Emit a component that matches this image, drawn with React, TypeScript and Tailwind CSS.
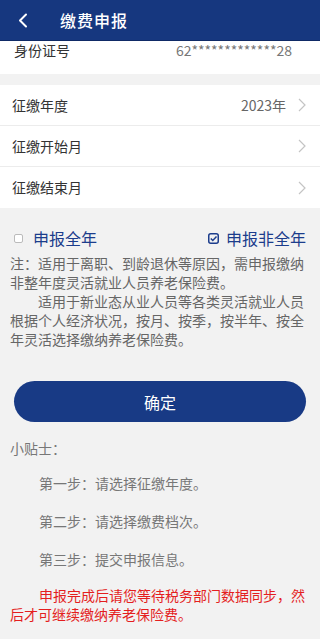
// 缴费申报 page
// Sections: Header · ID · Selections · Options · Notes · Button · Tips

const FONT = { fontFamily: '"Noto Sans CJK SC", "Noto Sans", Roboto, sans-serif' }

function Chevron() {
  return (
    <svg width="8" height="14" viewBox="0 0 8 14" fill="none" stroke="#c4c4c4" strokeWidth="1.2">
      <polyline points="1 1 7 7 1 13" />
    </svg>
  )
}

function SelectRow({ label, value, last }: { label: string; value?: string; last?: boolean }) {
  return (
    <div className={`flex items-center h-[41px] pl-3 pr-[14px] ${last ? '' : 'border-b border-[#ececec]'}`}>
      <span className="flex-1 text-[14px] text-[#333]">{label}</span>
      {value && <span className="text-[14px] text-[#666] mr-[12px]">{value}</span>}
      <Chevron />
    </div>
  )
}

export default function App() {
  return (
    <div className="w-[320px] h-[639px] overflow-hidden bg-[#f2f2f2]" style={FONT}>
      {/* Header */}
      <header className="h-[41px] bg-[#16377f] border-b border-[#0f2a66] flex items-center">
        <div className="w-[60px] pl-[18px]">
          <svg width="10" height="15" viewBox="0 0 10 15" fill="none" stroke="white" strokeWidth="2" strokeLinecap="round" strokeLinejoin="round">
            <polyline points="8 1.5 2 7.5 8 13.5" />
          </svg>
        </div>
        <h1 className="text-[16px] font-medium text-white tracking-[1px]">缴费申报</h1>
      </header>

      {/* ID number (scrolled) */}
      <div className="h-[33px] bg-white flex items-start px-[14px]">
        <span className="flex-1 text-[14px] leading-[18px] text-[#333]">身份证号</span>
        <span className="text-[14px] leading-[18px] text-[#777] mr-[14px]">62*************28</span>
      </div>

      {/* Selections */}
      <div className="mt-[11px] bg-white">
        <SelectRow label="征缴年度" value="2023年" />
        <SelectRow label="征缴开始月" />
        <SelectRow label="征缴结束月" last />
      </div>

      {/* Options */}
      <div className="flex items-center justify-between px-[14px] mt-[20px] h-[20px]">
        <label className="flex items-center gap-[10px] text-[16px] text-[#1c3d8c]">
          <span className="w-[9px] h-[9px] border border-[#bbb] rounded-[2px] bg-white" />
          申报全年
        </label>
        <label className="flex items-center gap-[7px] text-[16px] text-[#1c3d8c]">
          <svg width="11" height="11" viewBox="0 0 11 11" fill="none">
            <rect x="0.75" y="0.75" width="9.5" height="9.5" rx="2" stroke="#1c3d8c" strokeWidth="1.5" />
            <polyline points="2.8 5.5 4.8 7.5 8.5 3.5" stroke="#1c3d8c" strokeWidth="1.5" fill="none" />
          </svg>
          申报非全年
        </label>
      </div>

      {/* Notes */}
      <div className="px-[10px] mt-[6px] text-[14px] leading-[19px] text-[#666]">
        <p>注：适用于离职、到龄退休等原因，需申报缴纳非整年度灵活就业人员养老保险费。</p>
        <p className="indent-[28px]">适用于新业态从业人员等各类灵活就业人员根据个人经济状况，按月、按季，按半年、按全年灵活选择缴纳养老保险费。</p>
      </div>

      {/* Confirm */}
      <div className="px-[14px] mt-[32px]">
        <button className="w-full h-[41px] rounded-full bg-[#183a85] text-white text-[16px]">确定</button>
      </div>

      {/* Tips */}
      <div className="px-[10px] mt-[16px] text-[14px] text-[#777]">
        <p className="leading-[20px]">小贴士：</p>
        <div className="pl-[29px] mt-[15px] flex flex-col gap-[18px] leading-[20px]">
          <p>第一步：请选择征缴年度。</p>
          <p>第二步：请选择缴费档次。</p>
          <p>第三步：提交申报信息。</p>
        </div>
        <p className="mt-[17px] indent-[29px] leading-[19px] text-[#e41e1e]">
          申报完成后请您等待税务部门数据同步，然后才可继续缴纳养老保险费。
        </p>
      </div>
    </div>
  )
}
